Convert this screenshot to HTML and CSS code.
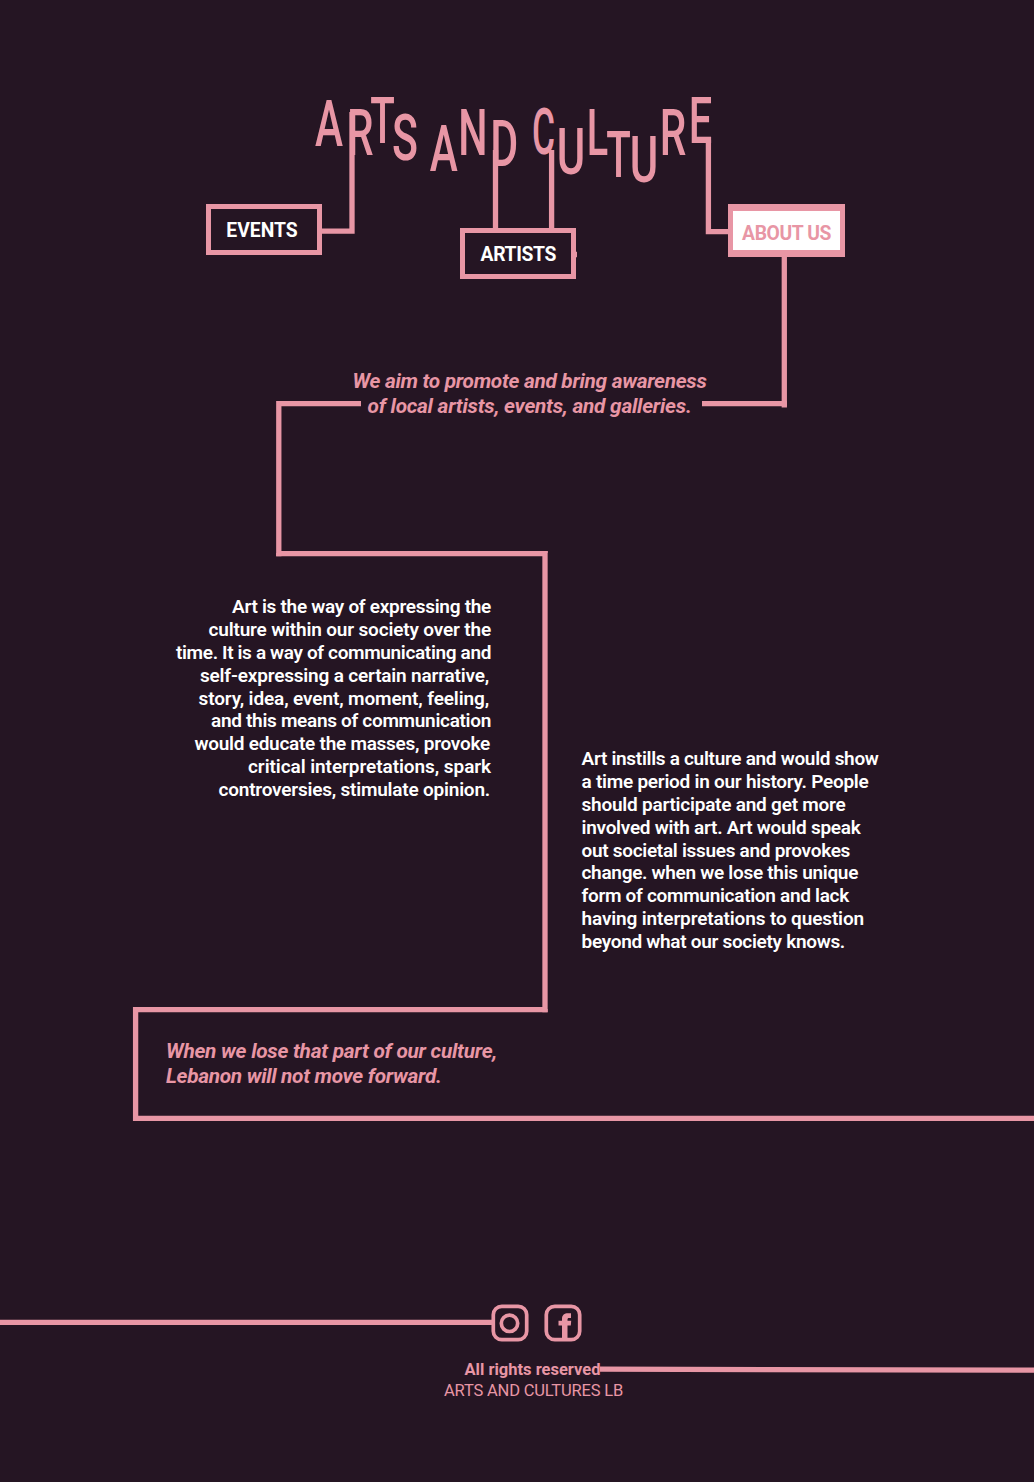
FILE: index.html
```html
<!DOCTYPE html>
<html lang="en">
<head>
<meta charset="utf-8">
<title>Arts and Culture</title>
<link rel="stylesheet" href="styles.css">
</head>
<body>
<div class="page">
  <svg class="lines" viewBox="0 0 1034 1482" aria-hidden="true">
    <path d="M352 112V231.2H320"/>
    <path d="M495.5 150V230M551.6 150V230M575 254.500H577"/>
    <path d="M708.4 140V231.6H730"/>
    <path d="M784.3 255V407.5M702 403.7H787"/>
    <path d="M361 403.7H278.8V553.6H545V1009.7H135.6V1118.4H1034"/>
    <path d="M278.8 553V556.2M545 553V551M545 1009V1012.3"/>
    <path d="M0 1322.4H492M600 1369.2L1034 1370.2"/>
  </svg>
  <header class="header">
    <svg class="logo" viewBox="0 0 1034 130" role="img" aria-label="Arts and Culture">
      <text transform="translate(315 61) scale(.66 1)">A</text>
      <text transform="translate(346.900 69.500) scale(.66 1)">R</text>
      <text transform="translate(370.200 58) scale(.63 1)">T</text>
      <text transform="translate(392 75) scale(.67 1)">S</text>
      <text transform="translate(429.700 86) scale(.66 1)">A</text>
      <text transform="translate(458.200 69.500) scale(.645 1)">N</text>
      <text transform="translate(490.200 81) scale(.67 1)">D</text>
      <text transform="translate(532 69) scale(.55 1)">C</text>
      <text transform="translate(556.800 89) scale(.68 1)">U</text>
      <text transform="translate(586.800 69.500) scale(.62 1)">L</text>
      <text transform="translate(606.200 91.500) scale(.63 1)">T</text>
      <text transform="translate(629.800 97) scale(.68 1)">U</text>
      <text transform="translate(659.700 69.500) scale(.66 1)">R</text>
      <text transform="translate(688.700 58) scale(.65 1)">E</text>
    </svg>
    <nav class="nav">
      <a class="box">EVENTS</a>
      <a class="box box-mid">ARTISTS</a>
      <a class="box box-active">ABOUT US</a>
    </nav>
  </header>
  <main class="main">
    <p class="quote aim"><span>We aim to promote and bring awareness</span><span>of local artists, events, and galleries.</span></p>
    <div class="columns">
      <p class="body left"><span>Art is the way of expressing the</span><span>culture within our society over the</span><span>time. It is a way of communicating and</span><span>self-expressing a certain narrative,</span><span>story, idea, event, moment, feeling,</span><span>and this means of communication</span><span>would educate the masses, provoke</span><span>critical interpretations, spark</span><span>controversies, stimulate opinion.</span></p>
      <p class="body right"><span>Art instills a culture and would show</span><span>a time period in our history. People</span><span>should participate and get more</span><span>involved with art. Art would speak</span><span>out societal issues and provokes</span><span>change. when we lose this unique</span><span>form of communication and lack</span><span>having interpretations to question</span><span>beyond what our society knows.</span></p>
    </div>
    <p class="quote closing"><span>When we lose that part of our culture,</span><span>Lebanon will not move forward.</span></p>
  </main>
  <footer class="footer">
    <div class="social">
      <svg viewBox="0 0 38 38"><rect x="2.300" y="2.300" width="33.400" height="33.400" rx="8.500"/><circle cx="18.500" cy="19.300" r="8.200"/></svg>
      <svg viewBox="0 0 38 38"><rect x="2.300" y="2.300" width="33.400" height="33.400" rx="8.500"/><path class="fill" d="M18 36V21.500H14.500V16.800H18V15C18 11 20.500 9.300 24 9.300H27V14H25C23.800 14 23.500 14.600 23.500 15.600V16.800H27.200L26.800 21.500H23.500V36Z"/></svg>
    </div>
    <p class="rights">All rights reserved</p>
    <p class="org">ARTS AND CULTURES LB</p>
  </footer>
</div>
</body>
</html>
```
FILE: styles.css
```css
* { box-sizing: border-box; }
body { margin: 0; background: #251523; }
.page { position: relative; width: 1034px; height: 1482px; overflow: hidden; font-family: Roboto, "Liberation Sans", sans-serif; color: #e896a5; }
.page p { margin: 0; }
.page p span { display: block; white-space: nowrap; }
.lines { position: absolute; inset: 0; width: 1034px; height: 1482px; fill: none; stroke: #e896a5; stroke-width: 5.3; }

.header { padding-top: 85px; height: 360px; }
.logo { display: block; width: 1034px; height: 130px; margin-bottom: -11px; overflow: visible; fill: #e896a5; font-size: 64px; font-weight: 500; }
.nav { position: relative; display: flex; align-items: flex-start; padding-left: 206px; }
.box { display: flex; align-items: center; justify-content: center; width: 116px; height: 51.3px; padding: 2px 4px 0 0; border: 5.3px solid #e896a5; background: #251523; color: #fff; font-size: 19.3px; font-weight: 700; white-space: nowrap; }
.box-mid { margin: 24px 0 0 138.3px; padding-right: 0; letter-spacing: -.34px; }
.box-active { width: 116.5px; height: 53px; margin-left: 152px; padding: 6px 0 0; border-width: 7px 5.5px; background: #fff; color: #e896a5; letter-spacing: -.39px; }

.main { height: 930px; }
.quote { font-size: 20.8px; line-height: 25px; font-weight: 700; font-style: italic; }
.aim { width: 1059px; padding-top: 9px; text-align: center; letter-spacing: -.287px; }
.aim span:nth-child(2) { letter-spacing: -.233px; }

.columns { display: grid; grid-template-columns: 491px 1fr; column-gap: 90.5px; height: 620px; padding-top: 177px; }
.body { color: #fff; font-size: 19px; line-height: 22.88px; font-weight: 600; }
.left { text-align: right; }
.left span:nth-child(1) { letter-spacing: -.287px; }
.left span:nth-child(2) { letter-spacing: -.166px; }
.left span:nth-child(3) { letter-spacing: -.355px; }
.left span:nth-child(4) { letter-spacing: -.185px; padding-right: 2px; }
.left span:nth-child(5) { letter-spacing: -.127px; padding-right: 2px; }
.left span:nth-child(6) { letter-spacing: -.308px; }
.left span:nth-child(7) { letter-spacing: -.262px; padding-right: 1px; }
.left span:nth-child(8) { letter-spacing: -.068px; }
.left span:nth-child(9) { letter-spacing: -.214px; padding-right: 1px; }
.right { padding-top: 152px; letter-spacing: -.3px; }
.right span:nth-child(2) { letter-spacing: -.253px; }
.right span:nth-child(3) { letter-spacing: -.232px; }
.right span:nth-child(4) { letter-spacing: -.267px; }
.right span:nth-child(8) { letter-spacing: -.139px; }

.closing { padding-left: 166px; letter-spacing: -.243px; }
.closing span:nth-child(2) { letter-spacing: -.303px; }

.footer { display: flex; flex-direction: column; align-items: center; padding-top: 14px; }
.social { display: flex; gap: 15px; margin: 0 0 17px 38px; }
.social svg { width: 38px; height: 38px; fill: none; stroke: #e896a5; stroke-width: 3.7; }
.social .fill { fill: #e896a5; stroke: none; }
.rights { padding-left: 31px; font-size: 16.5px; line-height: 21px; font-weight: 700; }
.org { padding-left: 33px; font-size: 16.5px; line-height: 21px; letter-spacing: -.18px; }
```
